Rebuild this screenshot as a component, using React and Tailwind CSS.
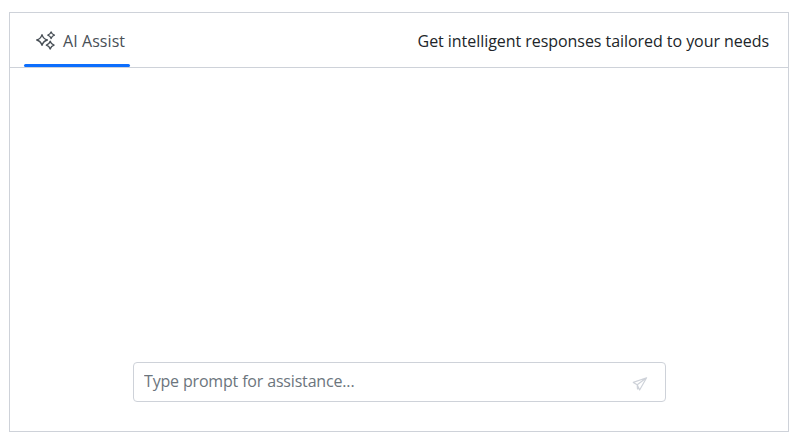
function SparkleIcon() {
  return (
    <svg className="h-5 w-5 shrink-0" viewBox="0 0 20 20" fill="none" stroke="currentColor" strokeWidth="1.35" strokeLinejoin="round">
      <path d="M6 3.6Q7.2 7.8 11.4 9Q7.2 10.2 6 14.4Q4.8 10.2 0.7 9Q4.8 7.8 6 3.6Z" />
      <path d="M15.1 0.9Q15.9 3.4 18.4 4.2Q15.9 5 15.1 7.5Q14.3 5 11.8 4.2Q14.3 3.4 15.1 0.9Z" />
      <path d="M14.2 10.2Q15.1 13.2 18.1 14.1Q15.1 15 14.2 18Q13.3 15 10.3 14.1Q13.3 13.2 14.2 10.2Z" />
    </svg>
  );
}

function SendIcon() {
  return (
    <svg className="h-4 w-4" viewBox="0 0 16 16" fill="none" stroke="currentColor" strokeWidth="1.2" strokeLinejoin="round">
      <path d="M14.6 1.8L1.3 6.4L5.2 8.8L7.6 14L14.6 1.8L5.2 8.8L5.5 13L7 11.8" />
    </svg>
  );
}

export default function App() {
  return (
    <div className="h-[439px] bg-white pt-3 pl-[9px] font-['Open_Sans','Noto_Sans',sans-serif] text-base leading-6">
      <main className="flex h-[420px] w-[780px] flex-col border border-[#ced2d9]">
        <header className="flex h-[55px] shrink-0 items-stretch justify-between border-b border-[#ced2d9] pr-[19px] pl-[14px]">
          <button className="flex w-[106px] flex-col text-[#495057]">
            <span className="flex h-[51px] items-center pt-[5px] pl-3">
              <SparkleIcon />
              <span className="ml-[7px] whitespace-nowrap tracking-[0.07px]">AI Assist</span>
            </span>
            <span className="h-[3px] w-full rounded-full bg-[#0d6efd]" />
          </button>
          <p className="pt-4 tracking-[-0.05px] whitespace-nowrap text-[#212529]">
            Get intelligent responses tailored to your needs
          </p>
        </header>
        <section className="flex flex-1 items-end pb-[29px] pl-[123px]">
          <div className="flex h-10 w-[533px] items-center rounded border border-[#ced2d9] pr-[17px] pl-[10px]">
            <input
              className="min-w-0 flex-1 bg-transparent pb-0.5 tracking-[-0.17px] outline-none placeholder:text-[#6c757d]"
              placeholder="Type prompt for assistance..."
            />
            <button aria-label="Send" className="pt-[3px] text-[#ced2d9]">
              <SendIcon />
            </button>
          </div>
        </section>
      </main>
    </div>
  );
}
